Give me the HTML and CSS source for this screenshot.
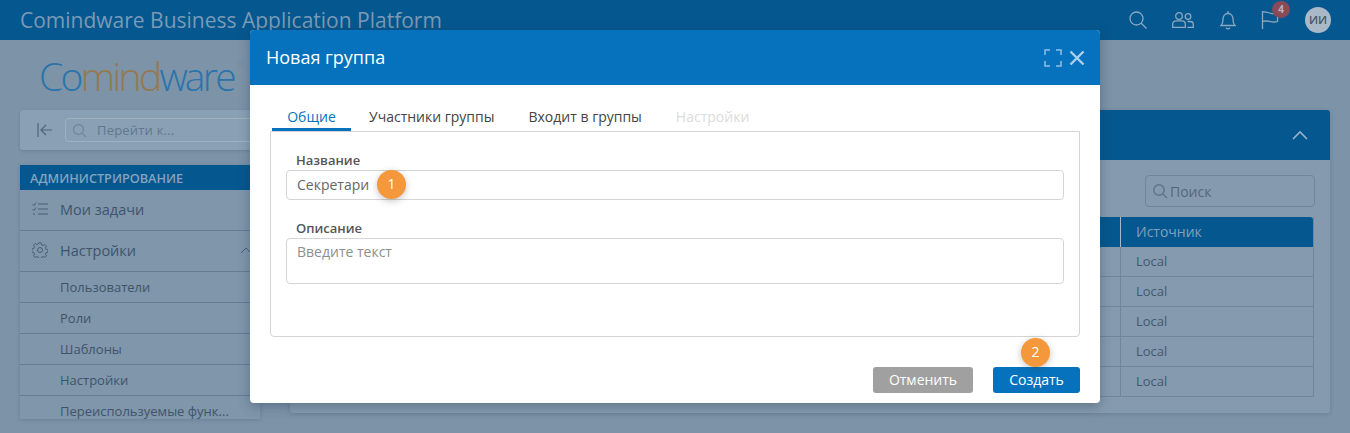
FILE: index.html
```html
<!DOCTYPE html>
<html lang="ru">
<head>
<meta charset="utf-8">
<title>Новая группа</title>
<link rel="stylesheet" href="styles.css">
</head>
<body>
<div class="app">
  <header class="topbar">
    <div class="app-title">Comindware Business Application Platform</div>
    <div class="top-icons">
      <svg class="ti" width="18" height="18" viewBox="0 0 18 18"><circle cx="7.500" cy="7.500" r="6.500"/><path d="M12 12l5.500 5.500"/></svg>
      <svg class="ti" width="22" height="16" viewBox="0 0 22 16"><circle cx="7" cy="4" r="3.300"/><path d="M.7 15.300v-3c0-2 1.500-3.500 3.500-3.500h5.600c2 0 3.500 1.500 3.500 3.500v3z"/><circle cx="16" cy="4.500" r="2.800"/><path d="M15.500 9.500h2.800c1.800 0 3 1.200 3 2.800v3h-6"/></svg>
      <svg class="ti" width="16" height="20" viewBox="0 0 16 20"><path d="M1 15.500h14c-1.500-1.500-2-3-2-6 0-3.500-2-6-5-6s-5 2.500-5 6c0 3-.5 4.500-2 6z"/><path d="M8 1v2.500M6 18c1 1 3 1 4 0"/></svg>
      <span class="flag">
        <svg class="ti" width="18" height="20" viewBox="0 0 18 20"><path d="M1.500 1v18M1.500 2c5-1 8 3 15 1.500v8c-6 2-10-2-15 0"/></svg>
        <span class="badge">4</span>
      </span>
      <span class="avatar">ИИ</span>
    </div>
  </header>
  <div class="content">
    <aside class="sidebar">
      <div class="logo"><span class="blue">Co</span><span class="tan">mind</span><span class="blue">ware</span><sup class="reg">®</sup></div>
      <div class="nav-search">
        <svg class="collapse" width="16" height="14" viewBox="0 0 16 14"><path d="M1 0v14M15 7H4M9 2L4 7l5 5"/></svg>
        <div class="goto">
          <svg class="glass" width="15" height="15" viewBox="0 0 15 15"><circle cx="6.500" cy="6.500" r="5"/><path d="M10.500 10.500L14 14"/></svg>
          <span>Перейти к...</span>
        </div>
      </div>
      <div class="nav">
        <div class="nav-head">АДМИНИСТРИРОВАНИЕ</div>
        <div class="nav-item">
          <svg class="ni" width="16" height="14" viewBox="0 0 16 14"><path d="M6 2h10M6 7h10M6 12h10M.5 2l1.500 1.500L4 .5M.5 7l1.500 1.500L4 5.500M1 12h2"/></svg>
          <span>Мои задачи</span>
        </div>
        <div class="nav-item">
          <svg class="ni" width="16" height="16" viewBox="0 0 16 16"><circle cx="8" cy="8" r="2.500"/><path d="M6.800 .8h2.400l.4 2 1.500.7 1.800-1 1.600 1.700-1 1.700.7 1.600 2 .4v2.200l-2 .4-.7 1.600 1 1.700-1.600 1.700-1.800-1-1.500.7-.4 2H6.800l-.4-2-1.500-.7-1.800 1-1.600-1.700 1-1.700-.7-1.600-2-.4V6.900l2-.4.7-1.600-1-1.700L3.100 1.500l1.800 1 1.500-.7z"/></svg>
          <span class="grow">Настройки</span>
          <svg class="ni chev" width="12" height="7" viewBox="0 0 12 7"><path d="M1 6l5-5 5 5"/></svg>
        </div>
        <div class="sub">Пользователи</div>
        <div class="sub">Роли</div>
        <div class="sub">Шаблоны</div>
        <div class="sub">Настройки</div>
        <div class="sub last">Переиспользуемые функ...</div>
      </div>
    </aside>
    <main class="panel">
      <div class="panel-head">
        <svg class="panel-chev" width="16" height="10" viewBox="0 0 16 10"><path d="M1 9l7-7 7 7"/></svg>
      </div>
      <div class="panel-body">
        <div class="search-row">
          <div class="search">
            <svg class="glass2" width="16" height="16" viewBox="0 0 16 16"><circle cx="7" cy="7" r="5.200"/><path d="M11 11l4 4"/></svg>
            <span>Поиск</span>
          </div>
        </div>
        <div class="table">
          <div class="tr th"><div class="c1"></div><div class="c2">Источник</div></div>
          <div class="tr"><div class="c1"></div><div class="c2">Local</div></div>
          <div class="tr"><div class="c1"></div><div class="c2">Local</div></div>
          <div class="tr"><div class="c1"></div><div class="c2">Local</div></div>
          <div class="tr"><div class="c1"></div><div class="c2">Local</div></div>
          <div class="tr"><div class="c1"></div><div class="c2">Local</div></div>
        </div>
      </div>
    </main>
  </div>
</div>

<section class="modal">
  <div class="modal-head">
    <h1>Новая группа</h1>
    <svg class="mi" width="18" height="18" viewBox="0 0 18 18"><path d="M1 6V1h5M12 1h5v5M17 12v5h-5M6 17H1v-5"/></svg>
    <svg class="mi close" width="16" height="16" viewBox="0 0 16 16"><path d="M1.500 1.500l13 13M14.500 1.500l-13 13"/></svg>
  </div>
  <div class="modal-body">
    <nav class="tabs">
      <span class="tab active">Общие</span>
      <span class="tab">Участники группы</span>
      <span class="tab">Входит в группы</span>
      <span class="tab off">Настройки</span>
    </nav>
    <div class="frame">
      <label class="lbl">Название</label>
      <div class="input">Секретари</div>
      <label class="lbl second">Описание</label>
      <div class="input area">Введите текст</div>
    </div>
    <div class="actions">
      <span class="btn cancel">Отменить</span>
      <span class="btn create">Создать</span>
    </div>
  </div>
</section>
<span class="step step1">1</span>
<span class="step step2">2</span>
</body>
</html>
```
FILE: styles.css
```css
* { box-sizing: border-box; }
html, body { margin: 0; height: 100%; }
body {
  width: 1350px; height: 433px; overflow: hidden; position: relative;
  background: #7c93a8;
  font-family: "Open Sans", "Noto Sans", sans-serif;
  color: #3f546c;
}
svg { fill: none; display: block; }

.topbar {
  height: 40px; background: #05578f; display: flex; align-items: center;
  justify-content: space-between; padding: 0 19px 0 20px;
}
.app-title { font-size: 21px; color: #7a9ab5; }
.top-icons { display: flex; align-items: center; }
.ti { stroke: #8aa8c0; stroke-width: 1.300; }
.top-icons > svg:nth-child(1) { margin-right: 25px; }
.top-icons > svg:nth-child(2) { margin-right: 26px; }
.top-icons > svg:nth-child(3) { margin-right: 25px; }
.flag { position: relative; display: block; margin-right: 26px; }
.badge {
  position: absolute; left: 11px; top: -9px; width: 18px; height: 17px; border-radius: 50%;
  background: #8a4a58; color: #b6b4bb; font-size: 10px; font-weight: 700; text-align: center; line-height: 17px;
}
.avatar {
  width: 26px; height: 26px; border-radius: 50%; background: #a9b9c8; color: #44576d;
  font-size: 11.500px; font-weight: 600; text-align: center; line-height: 26px;
}

.content { display: flex; align-items: flex-start; padding-left: 20px; }
.sidebar { width: 240px; height: 378px; }
.logo {
  height: 70px; padding: 11px 0 0 19px; font-size: 39px; line-height: 50px;
  font-weight: 350; letter-spacing: -2.700px; white-space: nowrap; font-family: "Open Sans", sans-serif;
}
.blue { color: #2a74ab; }
.tan { color: #96794f; }
.reg { font-size: 9px; color: #6f8ea9; vertical-align: 24px; line-height: 0; letter-spacing: 0; margin-left: 3px; }
.nav-search {
  height: 40px; background: #8aa0b4; border-radius: 3px; display: flex; align-items: center;
  padding-left: 17px; box-shadow: 0 1px 3px rgba(50,70,95,.25); overflow: hidden;
}
.collapse { stroke: #4f647c; stroke-width: 1.200; margin-right: 12px; flex: none; }
.goto {
  flex: none; width: 240px; height: 24px; border: 1px solid #a0b1c1; border-radius: 4px;
  display: flex; align-items: center; padding-left: 6px; font-size: 13px; color: #62778e; letter-spacing: .2px;
}
.glass { stroke: #73889d; stroke-width: 1.300; margin-right: 10px; }
.nav { margin-top: 15px; background: #7f96ab; box-shadow: 0 1px 4px rgba(50,70,95,.25); }
.nav-head {
  height: 25px; background: #05578f; color: #84a3bd; font-size: 12.700px; font-weight: 600;
  line-height: 26px; padding-left: 10px;
}
.nav-item {
  height: 41px; display: flex; align-items: center; padding: 0 0 2px 12px; font-size: 14.500px;
  color: #3f546c; border-bottom: 1px solid #647d95;
}
.nav-item:first-of-type { height: 40px; }
.ni { stroke: #4a5f76; stroke-width: 1; margin-right: 12px; flex: none; }
.nav-item .ni { width: 16px; }
.grow { flex: 1; }
.nav-item .chev { width: 12px; margin-right: 8px; }
.sub {
  height: 31px; line-height: 30px; padding-left: 40px; font-size: 13px; color: #3f546c;
  border-bottom: 1px solid #647d95; white-space: nowrap;
}
.sub.last { height: 23px; padding-top: 7px; line-height: 16px; border-bottom: 0; }

.panel {
  margin: 70px 0 0 30px; width: 1040px; height: 303px; background: #859aae; border-radius: 3px;
  box-shadow: 0 1px 4px rgba(50,70,95,.25);
}
.panel-head { height: 50px; background: #05578f; border-radius: 3px 3px 0 0; display: flex; justify-content: flex-end; align-items: center; padding: 0 22px 0 0; }
.panel-chev { stroke: #98b2c8; stroke-width: 1.600; }
.panel-body { padding: 15px 16px 0 15px; }
.search-row { display: flex; justify-content: flex-end; padding-right: 0; }
.search {
  width: 170px; height: 32px; border: 1px solid #6f869d; border-radius: 4px; display: flex; align-items: center;
  padding-left: 6px; font-size: 14px; color: #53687f; gap: 2px; margin-right: -1px;
}
.glass2 { stroke: #5f758c; stroke-width: 1.500; }
.table { margin-top: 10px; border-left: 1px solid #6f869d; border-right: 1px solid #6f869d; }
.tr { display: flex; height: 30px; border-bottom: 1px solid #6f869d; }
.tr .c1 { width: 815px; border-right: 1px solid #6f869d; }
.tr .c2 { padding-left: 15px; font-size: 13px; line-height: 29px; color: #44596f; }
.tr.th { background: #05578f; border: 0; border-radius: 3px 3px 0 0; }
.tr.th .c1 { border-right-color: #a6b8c7; }
.tr.th .c2 { color: #82a0ba; font-size: 14px; font-weight: 500; line-height: 30px; }

.modal {
  position: absolute; left: 250px; top: 30px; width: 850px; height: 373px; background: #fff;
  border-radius: 4px; box-shadow: 0 3px 12px rgba(30,45,65,.35); overflow: hidden;
}
.modal-head {
  height: 55px; background: #0672bd; display: flex; align-items: center; padding: 0 15px 0 16px;
}
.modal-head h1 { flex: 1; margin: 0 0 2px; font-size: 18px; font-weight: 500; color: #fff; }
.mi { stroke: #8fc0e6; stroke-width: 1.500; }
.mi.close { margin-left: 7px; stroke: #a9d0ee; stroke-width: 2.400; }
.modal-body { padding: 0 20px; }
.tabs { display: flex; height: 46px; padding-left: 2px; align-items: flex-end; }
.tab { height: 26px; font-size: 14px; line-height: 18px; padding-top: 3px; color: #444; margin-right: 34px; border-bottom: 3px solid transparent; white-space: nowrap; }
.tab.active { color: #0672bd; border-bottom-color: #0672bd; margin-right: 18px; width: 79px; text-align: center; }
.tab.off { color: #dcdcdc; }
.frame {
  height: 206px; margin-top: 0; border: 1px solid #d4d4d4; border-radius: 0 0 4px 4px; padding: 19px 15px 0; position: relative;
}
.lbl { display: block; font-size: 13px; line-height: 19px; font-weight: 600; color: #555; padding-left: 10px; }
.input {
  height: 30px; border: 1px solid #d4d4d4; border-radius: 4px; font-size: 14px; color: #666; padding-left: 10px; line-height: 28px;
}
.lbl.second { margin-top: 19px; }
.input.area { height: 46px; color: #8e8e8e; line-height: 26px; }
.actions { display: flex; justify-content: flex-end; gap: 20px; margin-top: 30px; }
.btn { height: 26px; border-radius: 3px; color: #fff; font-size: 14px; font-weight: 500; line-height: 26px; text-align: center; }
.cancel { width: 100px; background: #a0a0a0; }
.create { width: 87px; background: #0672bd; }

.step {
  position: absolute; width: 29px; height: 29px; border-radius: 50%; background: #f5983b; color: #fff;
  font-size: 14px; text-align: center; line-height: 27px; box-shadow: 0 2px 7px rgba(60,60,60,.3);
}
.step1 { left: 377px; top: 170px; }
.step2 { left: 1021px; top: 338px; }
```
